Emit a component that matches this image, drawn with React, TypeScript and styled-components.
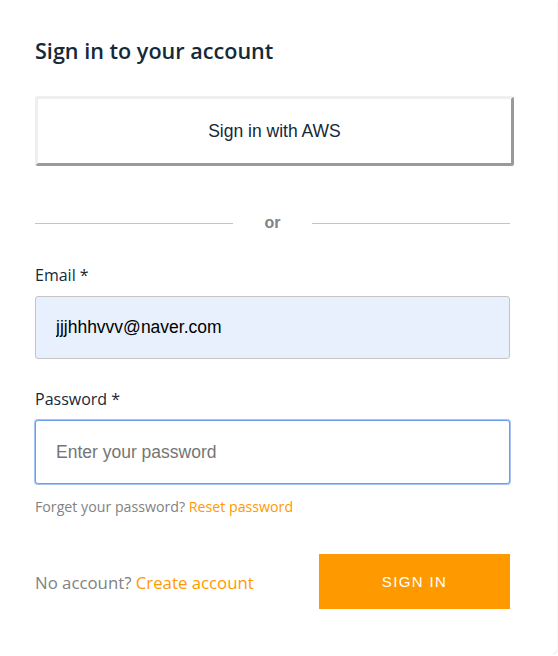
import React from "react";
import styled, { createGlobalStyle } from "styled-components";

const Global = createGlobalStyle`
  html, body { margin: 0; padding: 0; background: #ffffff; }
  * { box-sizing: border-box; }
`;

const Card = styled.section`
  width: 557px;
  min-height: 654px;
  padding: 36px 47px 0 35px;
  background: #ffffff;
  border-radius: 0 0 6px 0;
  box-shadow: 0 1px 2px 0 rgba(0, 0, 0, 0.12);
  font-family: "Open Sans", "Liberation Sans", sans-serif;
`;

const Title = styled.h1`
  margin: 0 0 30px;
  font-size: 21.6px;
  line-height: 30px;
  font-weight: 600;
  color: #152939;
`;

const FederatedButton = styled.button`
  display: block;
  width: calc(100% + 4px);
  height: 70px;
  margin: 0;
  padding: 0;
  background: #ffffff;
  border: 3px solid;
  border-color: #efefef #9a9a9a #9a9a9a #efefef;
  border-radius: 3px;
  font-family: "Liberation Sans", Arial, sans-serif;
  font-size: 17.5px;
  color: #152939;
  cursor: pointer;
`;

const Divider = styled.div`
  display: grid;
  grid-template-columns: 1fr 79px 1fr;
  align-items: center;
  height: 24px;
  margin-top: 44px;
`;

const Rule = styled.span`
  height: 1px;
  background: #c4c4c4;
`;

const OrText = styled.span`
  text-align: center;
  font-family: "Liberation Sans", Arial, sans-serif;
  font-weight: 700;
  font-size: 16px;
  line-height: 26px;
  color: #828282;
`;

const Field = styled.div<{ $top: number }>`
  display: flex;
  flex-direction: column;
  gap: 11px;
  margin-top: ${(p) => p.$top}px;
`;

const Label = styled.label`
  font-size: 16px;
  line-height: 20px;
  color: #152939;
`;

const Input = styled.input<{ $filled?: boolean; $focused?: boolean }>`
  display: block;
  width: 100%;
  height: ${(p) => (p.$focused ? 64 : 63)}px;
  padding: 0 20px;
  font-family: "Liberation Sans", Arial, sans-serif;
  font-size: 17.5px;
  color: #000000;
  background: ${(p) => (p.$filled ? "#e8f0fe" : "#ffffff")};
  border: 1px solid ${(p) => (p.$focused ? "#6d9eeb" : "#c4c4c4")};
  box-shadow: ${(p) => (p.$focused ? "0 0 0 1px #a6c4f3" : "none")};
  border-radius: 3px;
  outline: none;
  caret-color: #152939;
  &::placeholder { color: #757575; }
`;

const Hint = styled.div`
  margin-top: 14px;
  font-size: 14.2px;
  line-height: 18px;
  color: #828282;
`;

const Link = styled.a`
  color: #ff9900;
  text-decoration: none;
  cursor: pointer;
`;

const Footer = styled.div`
  display: flex;
  align-items: center;
  justify-content: space-between;
  margin-top: 38px;
`;

const FooterText = styled.span`
  font-size: 16.8px;
  line-height: 24px;
  padding-top: 2px;
  color: #828282;
`;

const PrimaryButton = styled.button`
  width: 191px;
  height: 55px;
  border: none;
  background: #ff9900;
  color: #ffffff;
  font-family: "Liberation Sans", Arial, sans-serif;
  font-size: 15px;
  letter-spacing: 1.375px;
  text-transform: uppercase;
  cursor: pointer;
`;

export default function App() {
  return (
    <>
      <Global />
      <Card>
        <Title>Sign in to your account</Title>
        <FederatedButton>Sign in with AWS</FederatedButton>
        <Divider>
          <Rule />
          <OrText>or</OrText>
          <Rule />
        </Divider>
        <Field $top={31}>
          <Label htmlFor="email">Email *</Label>
          <Input id="email" $filled defaultValue="jjjhhhvvv@naver.com" />
        </Field>
        <Field $top={30}>
          <Label htmlFor="password">Password *</Label>
          <Input
            id="password"
            type="password"
            $focused
            placeholder="Enter your password"
            autoFocus
          />
        </Field>
        <Hint>
          Forget your password? <Link>Reset password</Link>
        </Hint>
        <Footer>
          <FooterText>
            No account? <Link>Create account</Link>
          </FooterText>
          <PrimaryButton>Sign in</PrimaryButton>
        </Footer>
      </Card>
    </>
  );
}
